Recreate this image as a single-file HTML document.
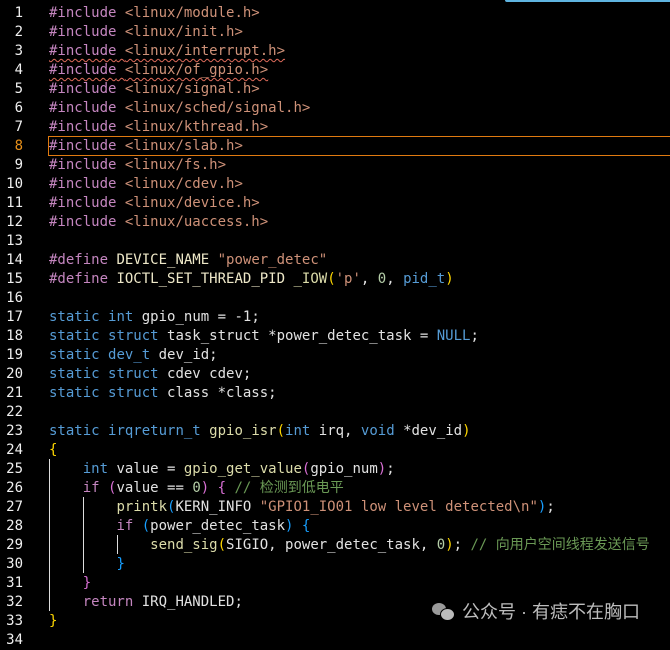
<!DOCTYPE html><html><head><meta charset="utf-8"><style>
body{margin:0;width:670px;height:637px;background:#000;overflow:hidden;position:relative;font-family:"DejaVu Sans Mono","Liberation Mono","Noto Sans CJK SC",monospace;font-size:14px;color:#e2e2e2}
.l{position:absolute;left:0;height:19px;line-height:19px;white-space:pre}
.n{position:absolute;left:0;width:23px;text-align:right;color:#f0f0f0}
.c{position:absolute;left:49px}
.i{color:#c586c0}.h{color:#ce9178}.k{color:#569cd6}.f{color:#dcdcaa}.d{color:#b5cea8}.g{color:#6a9955}.y{color:#ffd700}.p{color:#da70d6}.b{color:#179fff}.s{color:#ce9178}
.sq{text-decoration:underline wavy #e06c5c;text-decoration-thickness:1px;text-underline-offset:3px}
.v{position:absolute;width:1px;background:#ddd}
</style></head><body>
<div style="position:absolute;left:505px;top:0;width:165px;height:2px;background:#5fb4e0;border-bottom-left-radius:3px"></div>
<div style="position:absolute;left:48px;top:136px;width:630px;height:18px;border:1px solid #e07a10"></div>
<div class="v" style="left:49px;top:459px;height:152px"></div>
<div class="v" style="left:83px;top:497px;height:76px"></div>
<div class="v" style="left:117px;top:535px;height:19px"></div>
<div id="code"></div>
<div style="position:absolute;left:432px;top:598px;font-family:'Liberation Sans','Noto Sans CJK SC',sans-serif;font-size:18px;color:#bdbdbd;white-space:nowrap"><span style="display:inline-block;width:22px;height:17px;vertical-align:-2px;margin-right:8px;position:relative"><span style="position:absolute;left:0;top:0;width:14px;height:12px;border-radius:50%;background:#9a9a9a"></span><span style="position:absolute;left:8px;top:5px;width:13px;height:11px;border-radius:50%;background:#bbb;border:1px solid #000"></span></span>公众号 · 有痣不在胸口</div>
<script>
var L=[
'<span class="i">#include</span> <span class="h">&lt;linux/module.h&gt;</span>',
'<span class="i">#include</span> <span class="h">&lt;linux/init.h&gt;</span>',
'<span class="sq"><span class="i">#include</span> <span class="h">&lt;linux/interrupt.h&gt;</span></span>',
'<span class="sq"><span class="i">#include</span> <span class="h">&lt;linux/of_gpio.h&gt;</span></span>',
'<span class="i">#include</span> <span class="h">&lt;linux/signal.h&gt;</span>',
'<span class="i">#include</span> <span class="h">&lt;linux/sched/signal.h&gt;</span>',
'<span class="i">#include</span> <span class="h">&lt;linux/kthread.h&gt;</span>',
'<span class="i">#include</span> <span class="h">&lt;linux/slab.h&gt;</span>',
'<span class="i">#include</span> <span class="h">&lt;linux/fs.h&gt;</span>',
'<span class="i">#include</span> <span class="h">&lt;linux/cdev.h&gt;</span>',
'<span class="i">#include</span> <span class="h">&lt;linux/device.h&gt;</span>',
'<span class="i">#include</span> <span class="h">&lt;linux/uaccess.h&gt;</span>',
'',
'<span class="i">#define</span> <span style="color:#eee8c8">DEVICE_NAME</span> <span class="s">"power_detec"</span>',
'<span class="i">#define</span> <span style="color:#eee8c8">IOCTL_SET_THREAD_PID</span> <span class="f">_IOW</span><span class="y">(</span><span class="s">\'p\'</span>, <span class="d">0</span>, <span class="k">pid_t</span><span class="y">)</span>',
'',
'<span class="k">static</span> <span class="k">int</span> gpio_num = -1;',
'<span class="k">static</span> <span class="k">struct</span> task_struct *power_detec_task = <span class="k">NULL</span>;',
'<span class="k">static</span> <span class="k">dev_t</span> dev_id;',
'<span class="k">static</span> <span class="k">struct</span> cdev cdev;',
'<span class="k">static</span> <span class="k">struct</span> class *class;',
'',
'<span class="k">static</span> <span class="k">irqreturn_t</span> <span class="f">gpio_isr</span><span class="y">(</span><span class="k">int</span> irq, <span class="k">void</span> *dev_id<span class="y">)</span>',
'<span class="y">{</span>',
'    <span class="k">int</span> value = <span class="f">gpio_get_value</span><span class="p">(</span>gpio_num<span class="p">)</span>;',
'    <span class="i">if</span> <span class="p">(</span>value == <span class="d">0</span><span class="p">)</span> <span class="p">{</span> <span class="g">// 检测到低电平</span>',
'        <span class="f">printk</span><span class="b">(</span>KERN_INFO <span class="s">"GPIO1_IO01 low level detected\\n"</span><span class="b">)</span>;',
'        <span class="i">if</span> <span class="b">(</span>power_detec_task<span class="b">)</span> <span class="b">{</span>',
'            <span class="f">send_sig</span><span class="y">(</span>SIGIO, power_detec_task, <span class="d">0</span><span class="y">)</span>; <span class="g">// 向用户空间线程发送信号</span>',
'        <span class="b">}</span>',
'    <span class="p">}</span>',
'    <span class="i">return</span> IRQ_HANDLED;',
'<span class="y">}</span>',
''];
var h='';
for(var i=0;i<L.length;i++){var t=4+19*i;h+='<div class="l" style="top:'+t+'px;width:670px"><span class="n"'+(i==7?' style="color:#e8901a"':'')+'>'+(i+1)+'</span><span class="c">'+L[i]+'</span></div>';}
document.getElementById('code').innerHTML=h;
</script>
</body></html>
